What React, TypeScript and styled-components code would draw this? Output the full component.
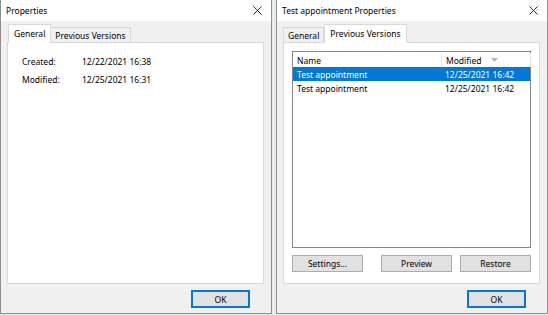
import React from 'react';
import styled, { createGlobalStyle } from 'styled-components';

const GlobalStyle = createGlobalStyle`
  html, body {
    margin: 0;
    padding: 0;
    background: #e9ece9;
  }
  body {
    font-family: "Noto Sans", "Open Sans", Arial, sans-serif;
    font-size: 8.5px;
    color: #000;
  }
`;

const StyledDesktop = styled.div`
  display: flex;
  gap: 4px;
  width: 548px;
  height: 315px;
`;

const StyledWindow = styled.div`
  width: 272px;
  height: 314px;
  box-sizing: border-box;
  border: 1px solid #8f8f8f;
  border-top: none;
  background: #f0f0f0;
  display: flex;
  flex-direction: column;
`;

const StyledTitleBar = styled.div`
  height: 21px;
  background: #fff;
  display: flex;
  align-items: center;
  justify-content: space-between;
  padding: 0 8px 0 5px;
  font-size: 8.5px;
`;

const StyledClose = styled.svg`
  width: 9px;
  height: 9px;
  margin-right: 1px;
`;

const StyledBody = styled.div`
  flex: 1;
  display: flex;
  flex-direction: column;
  padding: 1px 7px 0 6px;
`;

const StyledTabRow = styled.div`
  display: flex;
  align-items: flex-end;
  height: 21px;
  padding-left: 1px;
  position: relative;
  z-index: 1;
  margin-bottom: -1px;
`;

const StyledTab = styled.div<{ $active?: boolean }>`
  box-sizing: border-box;
  height: ${p => (p.$active ? '19px' : '16px')};
  padding: ${p => (p.$active ? '0 5px 1px' : '0 4px')};
  display: flex;
  align-items: center;
  background: ${p => (p.$active ? '#fff' : '#f0f0f0')};
  border: 1px solid #d9d9d9;
  border-bottom: ${p => (p.$active ? '1px solid #fff' : '1px solid #d9d9d9')};
  margin-left: ${p => (p.$active ? '0' : '-1px')};
  font-size: 8.5px;
  white-space: nowrap;
`;

const StyledPanel = styled.div`
  height: 242px;
  box-sizing: border-box;
  background: #fff;
  border: 1px solid #d9d9d9;
  display: flex;
  flex-direction: column;
`;

const StyledInfoGrid = styled.div`
  display: grid;
  grid-template-columns: 60px auto;
  row-gap: 6px;
  padding: 13px 0 0 14px;
  font-size: 8.5px;
  line-height: 12px;
`;

const StyledFooter = styled.div`
  display: flex;
  justify-content: flex-end;
  padding: 6px 14px 0 0;
`;

const StyledButton = styled.button<{ $default?: boolean; $width?: number }>`
  box-sizing: border-box;
  width: ${p => p.$width ?? 59}px;
  height: ${p => (p.$default ? 18 : 17)}px;
  padding: 0;
  background: #e1e1e1;
  border: ${p => (p.$default ? '2px solid #0078d7' : '1px solid #adadad')};
  font-family: inherit;
  font-size: 8.5px;
  color: #000;
`;

const StyledVersions = styled.div`
  flex: 1;
  display: flex;
  flex-direction: column;
  padding: 8px 8px 11px 8px;
  gap: 7px;
`;

const StyledList = styled.div`
  flex: 1;
  border: 1px solid #828790;
  background: #fff;
`;

const StyledRow = styled.div<{ $selected?: boolean; $header?: boolean }>`
  display: grid;
  grid-template-columns: 148px 89px 1px;
  height: 14px;
  align-items: center;
  background: ${p => (p.$selected ? '#0078d7' : 'transparent')};
  color: ${p => (p.$selected ? '#fff' : '#000')};
  font-size: 8.5px;
  margin-top: ${p => (p.$header ? '1px' : '0')};
`;

const StyledCell = styled.div<{ $divider?: boolean }>`
  height: 100%;
  display: flex;
  align-items: center;
  gap: 10px;
  padding-left: 4px;
  border-left: ${p => (p.$divider ? '1px solid #e5e5e5' : 'none')};
  white-space: nowrap;
`;

const StyledHeaderEnd = styled.div`
  height: 100%;
  background: #e5e5e5;
`;

const StyledButtonRow = styled.div`
  display: flex;
  gap: 8px;
`;

const StyledSpacer = styled.div`
  flex: 1;
`;

const CloseIcon = () => (
  <StyledClose viewBox="0 0 10 10">
    <path d="M0.5 0.5 L9.5 9.5 M9.5 0.5 L0.5 9.5" stroke="#1a1a1a" strokeWidth="1" />
  </StyledClose>
);

const SortArrow = () => (
  <svg width="7" height="4" viewBox="0 0 7 4">
    <path d="M0 0 H7 L3.5 4 Z" fill="#aeb4bc" />
  </svg>
);

interface WindowProps {
  title: string;
  activeTab: number;
  children: React.ReactNode;
}

const Window = ({ title, activeTab, children }: WindowProps) => (
  <StyledWindow>
    <StyledTitleBar>
      <span>{title}</span>
      <CloseIcon />
    </StyledTitleBar>
    <StyledBody>
      <StyledTabRow>
        <StyledTab $active={activeTab === 0}>General</StyledTab>
        <StyledTab $active={activeTab === 1}>Previous Versions</StyledTab>
      </StyledTabRow>
      <StyledPanel>{children}</StyledPanel>
      <StyledFooter>
        <StyledButton $default>OK</StyledButton>
      </StyledFooter>
    </StyledBody>
  </StyledWindow>
);

const versions = [
  { name: 'Test appointment', modified: '12/25/2021 16:42' },
  { name: 'Test appointment', modified: '12/25/2021 16:42' },
];

export default function App() {
  return (
    <>
      <GlobalStyle />
      <StyledDesktop>
        <Window title="Properties" activeTab={0}>
          <StyledInfoGrid>
            <span>Created:</span>
            <span>12/22/2021 16:38</span>
            <span>Modified:</span>
            <span>12/25/2021 16:31</span>
          </StyledInfoGrid>
        </Window>
        <Window title="Test appointment Properties" activeTab={1}>
          <StyledVersions>
            <StyledList>
              <StyledRow $header>
                <StyledCell>Name</StyledCell>
                <StyledCell $divider>
                  Modified
                  <SortArrow />
                </StyledCell>
                <StyledHeaderEnd />
              </StyledRow>
              {versions.map((v, i) => (
                <StyledRow key={i} $selected={i === 0}>
                  <StyledCell>{v.name}</StyledCell>
                  <StyledCell>{v.modified}</StyledCell>
                </StyledRow>
              ))}
            </StyledList>
            <StyledButtonRow>
              <StyledButton $width={71}>Settings...</StyledButton>
              <StyledSpacer />
              <StyledButton $width={71}>Preview</StyledButton>
              <StyledButton $width={71}>Restore</StyledButton>
            </StyledButtonRow>
          </StyledVersions>
        </Window>
      </StyledDesktop>
    </>
  );
}
